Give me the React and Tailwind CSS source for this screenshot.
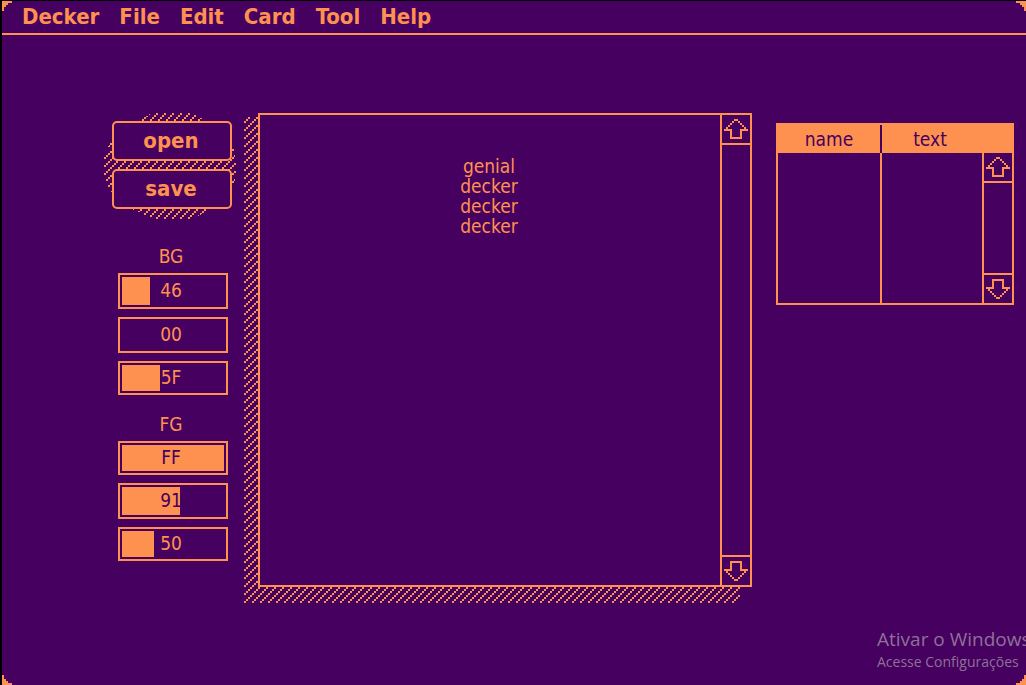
import React, { useState } from "react";

const MENUS = ["Decker", "File", "Edit", "Card", "Tool", "Help"];

function Hatch({ id, className, points }) {
  return (
    <svg className={className} aria-hidden="true" shapeRendering="crispEdges">
      <defs>
        <pattern id={id} width="8" height="8" patternUnits="userSpaceOnUse">
          <path d="M4 0h2v2h-2zM2 2h2v2h-2zM0 4h2v2h-2zM6 6h2v2h-2z" fill="#ff9150" />
        </pattern>
      </defs>
      {points ? (
        <polygon points={points} fill={`url(#${id})`} />
      ) : (
        <rect width="100%" height="100%" fill={`url(#${id})`} />
      )}
    </svg>
  );
}

function Corner({ className }) {
  return (
    <svg
      className={`pointer-events-none absolute h-[10px] w-[10px] ${className}`}
      viewBox="0 0 5 5"
      shapeRendering="crispEdges"
      aria-hidden="true"
    >
      <path d="M0 0h5v1h-2v1h-1v1h-1v2h-1z" fill="#ff9150" />
    </svg>
  );
}

function Arrow({ down }) {
  return (
    <svg
      className={`h-5 w-6 ${down ? "-scale-y-100" : ""}`}
      viewBox="0 0 12 10"
      shapeRendering="crispEdges"
      aria-hidden="true"
    >
      <path
        fill="#ff9150"
        d="M5 0h2v1h-2zM4 1h1v1h-1zM7 1h1v1h-1zM3 2h1v1h-1zM8 2h1v1h-1zM2 3h1v1h-1zM9 3h1v1h-1zM1 4h1v1h-1zM10 4h1v1h-1zM0 5h4v1h-4zM8 5h4v1h-4zM3 6h1v4h-1zM8 6h1v4h-1zM4 9h4v1h-4z"
      />
    </svg>
  );
}

function ScrollBar({ className = "" }) {
  return (
    <div className={`flex w-[30px] shrink-0 flex-col justify-between border-l-2 border-[#ff9150] ${className}`}>
      <button type="button" aria-label="Scroll up" className="flex h-[30px] items-center justify-center border-b-2 border-[#ff9150]">
        <Arrow />
      </button>
      <button type="button" aria-label="Scroll down" className="flex h-[30px] items-center justify-center border-t-2 border-[#ff9150]">
        <Arrow down />
      </button>
    </div>
  );
}

function PushButton({ children }) {
  return (
    <button
      type="button"
      className="relative h-10 rounded-[5px] border-2 border-[#ff9150] bg-[#46005f] pr-0.5 text-[22px] leading-6 font-bold"
    >
      {children}
    </button>
  );
}

function HexSlider({ name, initial, height }) {
  const [value, setValue] = useState(initial);
  const hex = value.toString(16).toUpperCase().padStart(2, "0");
  return (
    <label className={`relative block border-2 border-[#ff9150] p-0.5 focus-within:outline-1 ${height}`}>
      <span className="block h-full bg-[#ff9150]" style={{ width: `${(value / 255) * 100}%` }} />
      <span
        className={`absolute inset-0 flex items-center justify-center pr-1 pb-0.5 leading-[22px] ${
          value > 127 ? "text-[#46005f]" : "text-[#ff9150]"
        }`}
      >
        {hex}
      </span>
      <input
        type="range"
        min="0"
        max="255"
        value={value}
        aria-label={name}
        onChange={(e) => setValue(Number(e.target.value))}
        className="absolute inset-0 h-full w-full opacity-0"
      />
    </label>
  );
}

export default function App() {
  return (
    <div className="flex min-h-screen flex-col overflow-hidden bg-black pt-px pl-0.5 font-['DejaVu_Sans_Condensed','DejaVu_Sans',sans-serif] text-[19px] text-[#ff9150]">
      <div className="relative flex flex-1 flex-col overflow-hidden bg-[#46005f]">
        <nav className="flex h-[34px] items-center gap-5 border-b-2 border-[#ff9150] pl-5 text-[22px] leading-[30px] font-bold">
          {MENUS.map((m) => (
            <button key={m} type="button" className="font-bold">
              {m}
            </button>
          ))}
        </nav>

        <main className="flex flex-1 items-start pt-[78px] pr-3 pb-[98px] pl-[110px]">
          <section className="relative flex w-[120px] shrink-0 flex-col pt-2">
            <Hatch
              id="blob"
              className="absolute top-0 -left-2 h-[106px] w-[132px]"
              points="38,6 48,0 86,0 100,6 130,36 132,50 132,62 130,72 102,98 90,106 50,106 28,96 4,76 0,62 0,44 6,30"
            />
            <div className="flex flex-col gap-2">
              <PushButton>open</PushButton>
              <PushButton>save</PushButton>
            </div>
            <div className="flex flex-col gap-2 pt-9 pr-1 pl-1.5">
              <h2 className="-mb-0.5 pr-1 text-center leading-[22px]">BG</h2>
              <HexSlider name="Background red" initial={70} height="h-9" />
              <HexSlider name="Background green" initial={0} height="h-9" />
              <HexSlider name="Background blue" initial={95} height="h-[34px]" />
            </div>
            <div className="flex flex-col gap-2 pt-[18px] pr-1 pl-1.5">
              <h2 className="-mb-0.5 pr-1 text-center leading-[22px]">FG</h2>
              <HexSlider name="Foreground red" initial={255} height="h-[34px]" />
              <HexSlider name="Foreground green" initial={145} height="h-9" />
              <HexSlider name="Foreground blue" initial={80} height="h-[34px]" />
            </div>
          </section>

          <section className="relative ml-[26px] flex flex-1 self-stretch">
            <div className="absolute top-1 right-3 -bottom-4 -left-3.5">
              <Hatch id="shade" className="h-full w-full" />
            </div>
            <div className="relative flex flex-1 border-2 border-[#ff9150] bg-[#46005f]">
              <textarea
                aria-label="Document"
                className="min-w-0 flex-1 resize-none overflow-hidden bg-transparent pt-[41px] pr-0.5 text-center leading-5 outline-none"
                defaultValue={"genial\ndecker\ndecker\ndecker"}
                spellCheck={false}
              />
              <ScrollBar />
            </div>
          </section>

          <table className="mt-2.5 ml-6 w-[238px] shrink-0 table-fixed border-separate border-spacing-0 border-2 border-[#ff9150]">
            <thead>
              <tr className="h-7 bg-[#ff9150] leading-[22px] text-[#46005f]">
                <th className="w-[104px] border-r-2 border-[#46005f] p-0 font-normal">name</th>
                <th className="p-0 pr-1 font-normal">text</th>
                <th className="w-[30px] p-0" aria-label="Scroll" />
              </tr>
            </thead>
            <tbody>
              <tr>
                <td className="border-r-2 border-[#ff9150] p-0" />
                <td className="p-0" />
                <td className="p-0">
                  <ScrollBar className="h-[150px]" />
                </td>
              </tr>
            </tbody>
          </table>
        </main>

        <Corner className="top-0 left-0" />
        <Corner className="top-0 right-0 -scale-x-100" />
        <Corner className="bottom-0 left-0 -scale-y-100" />
        <Corner className="right-0 bottom-0 -scale-100" />

        <aside className="pointer-events-none absolute right-0 bottom-3 w-[149px] font-['Open_Sans',sans-serif] whitespace-nowrap text-[#8f7099]">
          <p className="text-[19px] leading-6">Ativar o Windows</p>
          <p className="text-[14px] leading-[22px]">Acesse Configurações</p>
        </aside>
      </div>
    </div>
  );
}
